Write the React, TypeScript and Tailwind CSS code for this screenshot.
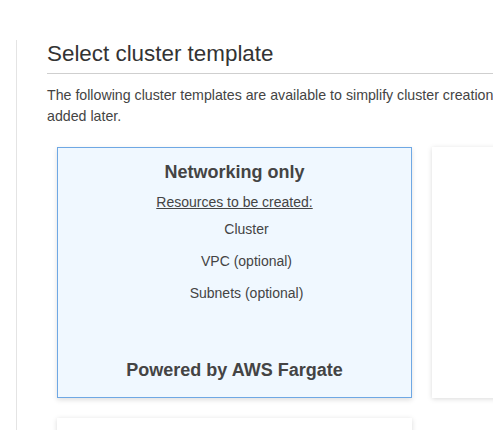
const resources = ["Cluster", "VPC (optional)", "Subnets (optional)"];

export default function App() {
  return (
    <div className="h-[430px] w-[493px] overflow-hidden bg-white font-['Liberation_Sans',Arial,sans-serif] text-[#444]">
      <div className="flex pt-[40px]">
        <div className="ml-[16px] h-[400px] w-px shrink-0 bg-[#e4e4e4]" />
        <div className="w-[1000px] shrink-0 pl-[30px]">
          <h2 className="text-[22.4px] leading-[28px] text-[#333]">Select cluster template</h2>
          <div className="mt-[5px] h-px w-full bg-[#cfcfcf]" />
          <p className="mt-[11px] text-[14.2px] leading-[21px]">
            The following cluster templates are available to simplify cluster creation. Additional
            configuration and integrations can be
            <br />
            added later.
          </p>
          <div className="mt-[20px] ml-[10px] grid grid-cols-[355px_355px] gap-[20px]">
            <div className="flex h-[251px] flex-col items-center border border-[#6fa8e4] bg-[#f0f8ff] pt-[12px] shadow-[0_2px_5px_rgba(0,0,0,0.13)]">
              <h3 className="text-[18px] font-bold leading-[24px]">Networking only</h3>
              <p className="mt-[9px] text-[14px] leading-[18px] underline">Resources to be created:</p>
              <ul className="mt-[9px] flex flex-col items-center gap-[14px] pl-[24px] text-[14px] leading-[18px]">
                {resources.map((r) => (
                  <li key={r}>{r}</li>
                ))}
              </ul>
              <p className="mt-auto mb-[15px] text-[18px] font-bold leading-[24px]">Powered by AWS Fargate</p>
            </div>
            <div className="h-[251px] bg-white shadow-[0_1px_5px_rgba(0,0,0,0.15)]" />
            <div className="h-[251px] bg-white shadow-[0_1px_5px_rgba(0,0,0,0.15)]" />
          </div>
        </div>
      </div>
    </div>
  );
}
